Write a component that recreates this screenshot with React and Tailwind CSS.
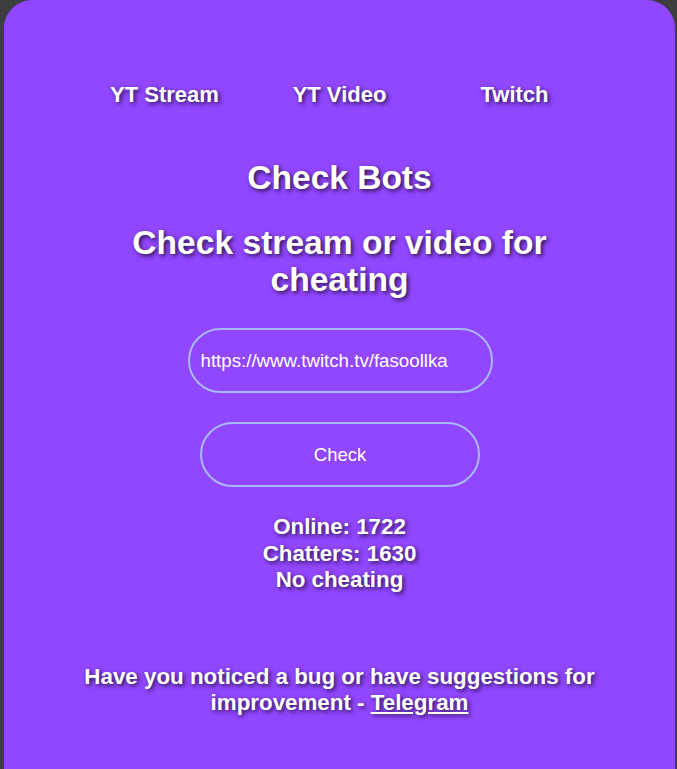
import { useState } from 'react';

// ── Shared text shadow used on the headings / nav / stats ──
const shadow = '[text-shadow:2px_2px_4px_rgba(0,0,0,0.7)]';

const NAV = ['YT Stream', 'YT Video', 'Twitch'];

export default function App() {
  const [url, setUrl] = useState('https://www.twitch.tv/fasoollka');

  return (
    <div className="min-h-[769px] bg-[#3c3e40] pl-[4px] pr-[2px] font-['Liberation_Sans',Arial,sans-serif] text-white">
      <div className="min-h-[769px] w-[671px] rounded-t-[28px] bg-[#9146ff] pt-[82px] text-center">

        {/* ── Nav ── */}
        <nav className="mx-auto grid w-[525px] grid-cols-3">
          {NAV.map(item => (
            <a key={item} href="#" className={`text-[22px] font-bold leading-[25px] ${shadow}`}>
              {item}
            </a>
          ))}
        </nav>

        {/* ── Titles ── */}
        <h1 className={`mt-[52px] text-[33.5px] font-bold leading-[38px] ${shadow}`}>Check Bots</h1>
        <h2 className={`mx-auto mt-[27px] w-[470px] text-[33.6px] font-bold leading-[37px] ${shadow}`}>
          Check stream or video for cheating
        </h2>

        {/* ── Form ── */}
        <div className="mt-[30px] flex flex-col items-center gap-[29px]">
          <input
            value={url}
            onChange={e => setUrl(e.target.value)}
            className="ml-[1px] h-[65px] w-[305px] rounded-full border-2 border-[#aab9ff] bg-transparent px-[11px] text-[18.7px] text-white outline-none"
          />
          <button className="ml-[1px] h-[65px] w-[280px] rounded-full border-2 border-[#aab9ff] bg-transparent text-[18.5px] text-white">
            Check
          </button>
        </div>

        {/* ── Result ── */}
        <div className={`mt-[27px] text-[22.3px] font-bold leading-[26.5px] ${shadow}`}>
          <p>Online: 1722</p>
          <p>Chatters: 1630</p>
          <p>No cheating</p>
        </div>

        {/* ── Footer ── */}
        <p className={`mx-auto mt-[70px] w-[570px] text-[22.35px] font-bold leading-[26px] ${shadow}`}>
          Have you noticed a bug or have suggestions for improvement -{' '}
          <a href="#" className="underline">Telegram</a>
        </p>
      </div>
    </div>
  );
}
